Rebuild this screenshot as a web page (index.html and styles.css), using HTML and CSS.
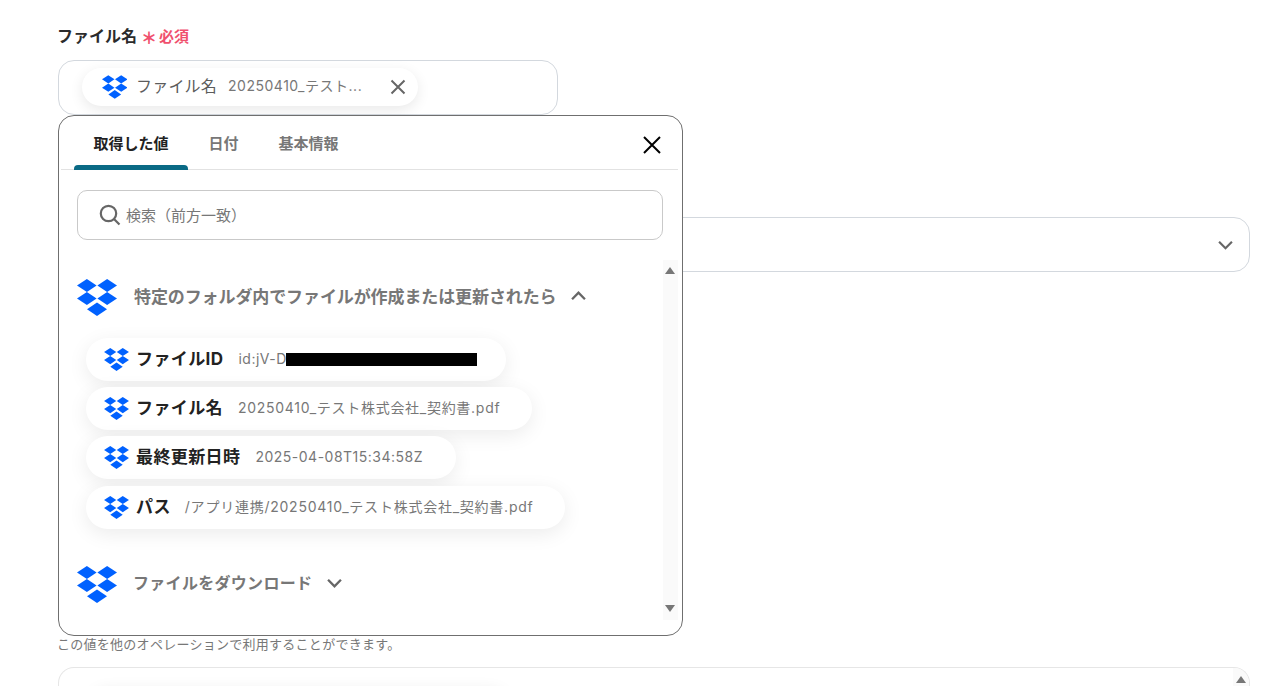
FILE: index.html
```html
<!DOCTYPE html>
<html lang="ja">
<head>
<meta charset="utf-8">
<title>ファイル名</title>
<link rel="stylesheet" href="styles.css">
</head>
<body>
<svg class="defs" aria-hidden="true">
  <symbol id="db" viewBox="0 0 40 37">
    <polygon points="9.9,0 19.6,6.5 9.9,13 0,6.5"/>
    <polygon points="30.1,0 40,6.5 30.1,13 20.4,6.5"/>
    <polygon points="9.9,13 19.6,19.5 9.9,26 0,19.5"/>
    <polygon points="30.1,13 40,19.5 30.1,26 20.4,19.5"/>
    <polygon points="20,23.4 30,30.2 20,37 10,30.2"/>
  </symbol>
</svg>
<main class="page">
  <div class="label"><span>ファイル名</span><span class="star">＊</span><span class="req">必須</span></div>
  <div class="field chip-field">
    <div class="chip">
      <svg class="db chip-db"><use href="#db"/></svg>
      <span class="chip-label">ファイル名</span>
      <span class="chip-value">20250410_テスト...</span>
      <svg class="chip-x" viewBox="0 0 16 16"><path d="M1.5 1.5l13 13M14.5 1.5l-13 13"/></svg>
    </div>
  </div>
  <div class="field select-field">
    <svg class="chev" viewBox="0 0 14 9"><path d="M1 1.5l6 6 6-6"/></svg>
  </div>
  <p class="hint">この値を他のオペレーションで利用することができます。</p>
  <div class="field bottom-field">
    <div class="ghost-chip"></div>
    <div class="bottom-scroll"><span class="arrow up"></span></div>
  </div>

  <section class="popup">
    <div class="tabs">
      <div class="tab active">取得した値</div>
      <div class="tab">日付</div>
      <div class="tab">基本情報</div>
      <svg class="close" viewBox="0 0 20 20"><path d="M2 2l16 16M18 2L2 18"/></svg>
    </div>
    <div class="search">
      <svg class="lens" viewBox="0 0 22 22"><circle cx="9.5" cy="9.5" r="7.7"/><path d="M15 15l5.5 5.5"/></svg>
      <span class="placeholder">検索（前方一致）</span>
    </div>
    <div class="pane">
      <div class="list">
        <div class="group-head">
          <svg class="db head-db"><use href="#db"/></svg>
          <span class="head-text">特定のフォルダ内でファイルが作成または更新されたら</span>
          <svg class="head-chev" viewBox="0 0 14 9"><path d="M1 7.5l6-6 6 6"/></svg>
        </div>
        <div class="pills">
          <div class="pill w1">
            <svg class="db pill-db"><use href="#db"/></svg>
            <b>ファイルID</b><span class="val latin">id:jV-D</span><i class="redact"></i>
          </div>
          <div class="pill w2">
            <svg class="db pill-db"><use href="#db"/></svg>
            <b>ファイル名</b><span class="val">20250410_テスト株式会社_契約書.pdf</span>
          </div>
          <div class="pill w3">
            <svg class="db pill-db"><use href="#db"/></svg>
            <b>最終更新日時</b><span class="val latin">2025-04-08T15:34:58Z</span>
          </div>
          <div class="pill w4">
            <svg class="db pill-db"><use href="#db"/></svg>
            <b>パス</b><span class="val path">/アプリ連携/20250410_テスト株式会社_契約書.pdf</span>
          </div>
        </div>
        <div class="group-head second">
          <svg class="db head-db"><use href="#db"/></svg>
          <span class="head-text">ファイルをダウンロード</span>
          <svg class="head-chev" viewBox="0 0 14 9"><path d="M1 1.5l6 6 6-6"/></svg>
        </div>
      </div>
      <div class="scrollbar"><span class="arrow up"></span><span class="arrow down"></span></div>
    </div>
  </section>
</main>
</body>
</html>
```

FILE: styles.css
```css
* { box-sizing: border-box; }
html, body { margin: 0; height: 686px; overflow: hidden; background: #fff; }
body { font-family: "Inter", "Noto Sans CJK JP", sans-serif; color: #222; }
.defs { position: absolute; width: 0; height: 0; }
.db { fill: #0061ff; display: block; flex: none; }

.page { position: relative; height: 686px; overflow: hidden; padding: 24px 35px 0 57px; }
.label { display: flex; align-items: center; height: 24px; padding-bottom: 2px; font-size: 16px; font-weight: 700; color: #2b2b2b; }
.star { color: #f0506e; font-size: 16px; font-weight: 900; margin: 3px 2px 0 4px; }
.req { color: #f0506e; font-size: 15px; font-weight: 700; }

.field { margin-left: 1px; border: 1px solid #d3d8de; border-radius: 16px; height: 55px; }
.chip-field { width: 500px; margin-top: 12px; padding: 7px 0 0 23px; }
.chip { display: flex; align-items: center; width: 336px; height: 38px; border-radius: 19px; background: #fff; box-shadow: 0 4px 14px rgba(0, 0, 0, .09); padding-left: 19.5px; }
.chip-db { width: 25.5px; height: 24px; }
.chip-label { font-size: 16px; letter-spacing: .2px; color: #5c5c5c; margin: 0 0 4px 9px; }
.chip-value { font-size: 14px; color: #777; margin: 0 0 4px 11px; letter-spacing: .52px; width: 150px; white-space: nowrap; }
.chip-x { width: 16px; height: 16px; margin-left: 12px; fill: none; stroke: #666; stroke-width: 2; }

.select-field { margin-top: 102px; position: relative; display: flex; align-items: center; justify-content: flex-end; padding-right: 16px; }
.chev { width: 15px; height: 10px; fill: none; stroke: #666; stroke-width: 2; }
.hint { margin: 362px 0 0; height: 20px; line-height: 20px; font-size: 13px; letter-spacing: .27px; color: #777; }
.bottom-field { position: relative; margin-top: 13px; height: 19px; border-color: #e6e6e6; border-bottom: 0; border-radius: 16px 16px 0 0; padding: 22px 0 0 30px; overflow: hidden; }
.ghost-chip { width: 420px; height: 40px; border-radius: 20px; box-shadow: 0 0 16px rgba(0, 0, 0, .08); }
.bottom-scroll { position: absolute; top: 0; right: 0; width: 16px; height: 100%; background: #fafafa; display: flex; justify-content: center; padding-top: 8px; }

.popup { position: absolute; left: 58px; top: 115px; width: 625px; height: 521px; background: #fff; border: 1px solid #6f6f6f; border-radius: 16px; }
.tabs { position: relative; display: flex; gap: 1px; height: 54px; margin: 0 4px 0 2px; padding-left: 13px; border-bottom: 1px solid #e2e2e2; }
.tab { padding: 18px 19.5px 0; font-size: 15px; font-weight: 700; color: #777; line-height: 20px; }
.tab.active { color: #222; position: relative; }
.tab.active::after { content: ""; position: absolute; left: 0; right: 0; bottom: -1px; height: 5px; border-radius: 4px 4px 0 0; background: #0a6a85; }
.close { position: absolute; right: 16px; top: 19px; width: 20px; height: 20px; fill: none; stroke: #000; stroke-width: 2; }

.search { display: flex; align-items: center; width: 586px; height: 50px; margin: 20px 0 0 18px; padding-left: 21px; border: 1px solid #c9c9c9; border-radius: 10px; font-size: 15px; color: #777; }
.placeholder { margin-bottom: 2px; }
.lens { width: 22px; height: 22px; margin-right: 5px; fill: none; stroke: #666; stroke-width: 2.2; }

.pane { display: flex; height: 360px; margin-top: 20px; }
.list { width: 604px; padding: 19px 0 0 18px; }
.group-head { display: flex; align-items: center; height: 37px; font-size: 17px; font-weight: 700; color: #777; }
.group-head.second { margin-top: 37px; }
.head-text { margin-bottom: 4px; letter-spacing: -.1px; }
.second .head-text { font-size: 16px; letter-spacing: .3px; margin: 0 0 6px -1px; }
.head-db { width: 40px; height: 37px; margin-right: 17px; }
.head-chev { width: 15px; height: 10px; margin: 0 0 3px 14px; fill: none; stroke: #666; stroke-width: 2.2; }
.second .head-chev { margin-left: 15px; }

.pills { display: flex; flex-direction: column; margin: 22px 0 0 9px; }
.pill { display: flex; align-items: center; height: 43px; border-radius: 22px; background: #fff; box-shadow: 0 5px 20px rgba(0, 0, 0, .08); padding-left: 18px; margin-bottom: 6px; white-space: nowrap; }
.pill:nth-child(3) { margin-bottom: 7px; }
.pill:last-child { margin-bottom: 0; }
.w1 { width: 420px; }
.w2 { width: 446px; }
.w3 { width: 370px; }
.w4 { width: 479px; }
.pill-db { width: 25px; height: 23px; margin-right: 7px; }
.pill b { font-size: 17px; letter-spacing: .4px; font-weight: 700; color: #222; margin-bottom: 4px; }
.val { font-size: 14px; letter-spacing: .72px; color: #777; margin: 0 0 3px 15px; }
.val.latin { letter-spacing: .5px; }
.val.path { margin-left: 14px; letter-spacing: .76px; }
.redact { display: block; width: 191px; height: 13px; margin-left: -1px; background: #000; }

.scrollbar { width: 15px; background: #fafafa; display: flex; flex-direction: column; justify-content: space-between; align-items: center; padding: 7px 1px 8px 0; }
.arrow { display: block; width: 0; height: 0; border-left: 5px solid transparent; border-right: 5px solid transparent; }
.arrow.up { border-bottom: 7px solid #777; }
.arrow.down { border-top: 7px solid #777; }
```
